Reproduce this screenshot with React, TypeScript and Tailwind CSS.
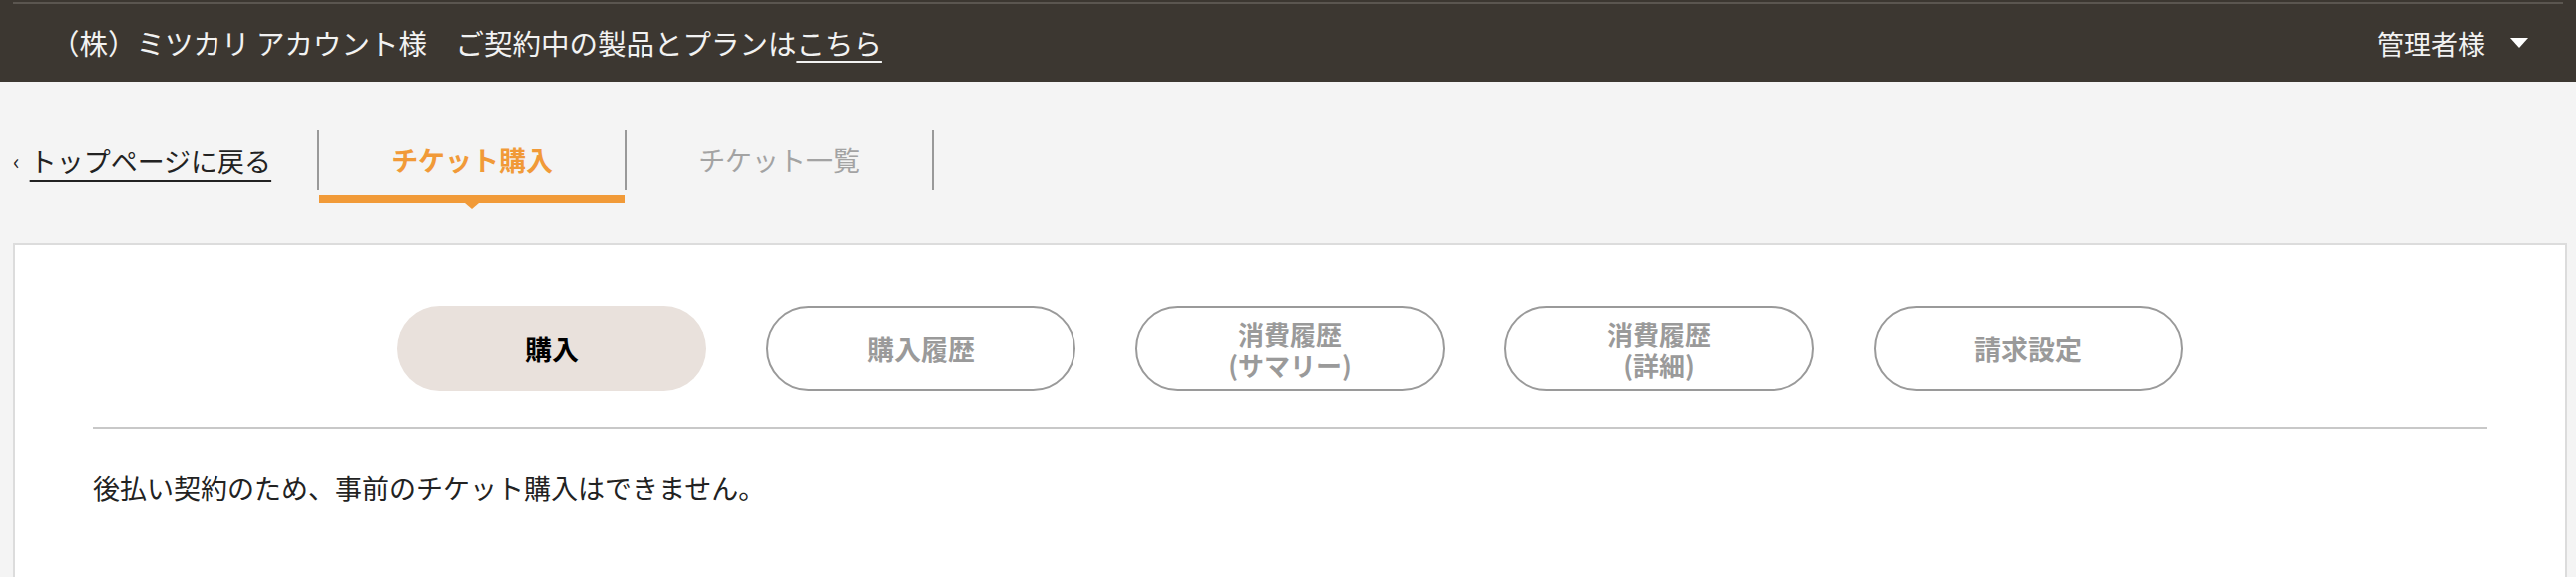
import React from 'react';

const font = { fontFamily: '"Noto Sans CJK JP", "Noto Sans", sans-serif' };

type Pill = { label: string; active?: boolean };

const pills: Pill[] = [
  { label: '購入', active: true },
  { label: '購入履歴' },
  { label: '消費履歴\n(サマリー)' },
  { label: '消費履歴\n(詳細)' },
  { label: '請求設定' },
];

const Header: React.FC = () => (
  <header className="bg-[#3c3731] h-[82px] flex flex-col">
    <div className="mx-[13px] mt-[2px] h-[2px] bg-[#5b5650]" />
    <div className="flex-1 flex items-center justify-between pl-[51px] pr-[48px] text-[28.5px] text-[#f2f2f2] leading-none">
      <div className="whitespace-pre">
        <span>（株）ミツカリ アカウント様　ご契約中の製品とプランは</span>
        <span className="underline underline-offset-[6px] decoration-2">こちら</span>
      </div>
      <div className="flex items-center gap-[25px]">
        <span className="text-[27px]">管理者様</span>
        <svg width="18" height="10" viewBox="0 0 18 10">
          <path d="M0 0 L18 0 L9 10 Z" fill="#ffffff" />
        </svg>
      </div>
    </div>
  </header>
);

const NavTabs: React.FC = () => (
  <nav className="flex items-start pl-[13px] pt-[48px] h-[161px]">
    <a className="h-[60px] flex items-center text-[#222] cursor-pointer">
      <span className="text-[22px] mr-[10px] leading-none">‹</span>
      <span className="text-[27px] underline underline-offset-[8px] decoration-2 leading-none">
        トップページに戻る
      </span>
    </a>
    <div className="flex items-start ml-[46px]">
      <div className="w-[2px] h-[60px] bg-[#999]" />
      <div className="w-[306px] flex flex-col">
        <div className="h-[60px] flex items-center justify-center text-[27px] font-bold text-[#f19a38]">
          チケット購入
        </div>
        <div className="relative mt-[5px] h-[8px] bg-[#f19a38]">
          <svg
            className="absolute left-1/2 -translate-x-1/2 top-[8px]"
            width="14"
            height="6"
            viewBox="0 0 14 6"
          >
            <path d="M0 0 L14 0 L7 6 Z" fill="#f19a38" />
          </svg>
        </div>
      </div>
      <div className="w-[2px] h-[60px] bg-[#999]" />
      <div className="w-[306px] h-[60px] flex items-center justify-center text-[27px] text-[#a3a3a3]">
        チケット一覧
      </div>
      <div className="w-[2px] h-[60px] bg-[#999]" />
    </div>
  </nav>
);

const App: React.FC = () => {
  return (
    <div className="bg-[#f4f4f4] h-[578px] overflow-hidden" style={font}>
      <Header />
      <NavTabs />
      <section className="ml-[13px] w-[2560px] min-h-[400px] bg-white border-2 border-[#dcdcdc] px-[78px] pt-[62px]">
        <div className="flex justify-center gap-[60px]">
          {pills.map((p, i) => (
            <button
              key={i}
              className={`w-[310px] h-[85px] rounded-full flex items-center justify-center font-bold ${
                p.label.includes('\n') ? 'text-[26px]' : 'text-[27px]'
              } ${
                p.active
                  ? 'bg-[#e9e1dc] text-black'
                  : 'bg-white border-2 border-[#9a9a9a] text-[#9a9a9a]'
              }`}
            >
              <span className="whitespace-pre-line text-center leading-[31px]">{p.label}</span>
            </button>
          ))}
        </div>
        <div className="mt-[36px] h-[2px] bg-[#c8c8c8]" />
        <p className="mt-[39px] text-[27px] leading-[40px] text-[#222]">
          後払い契約のため、事前のチケット購入はできません。
        </p>
      </section>
    </div>
  );
};

export default App;
